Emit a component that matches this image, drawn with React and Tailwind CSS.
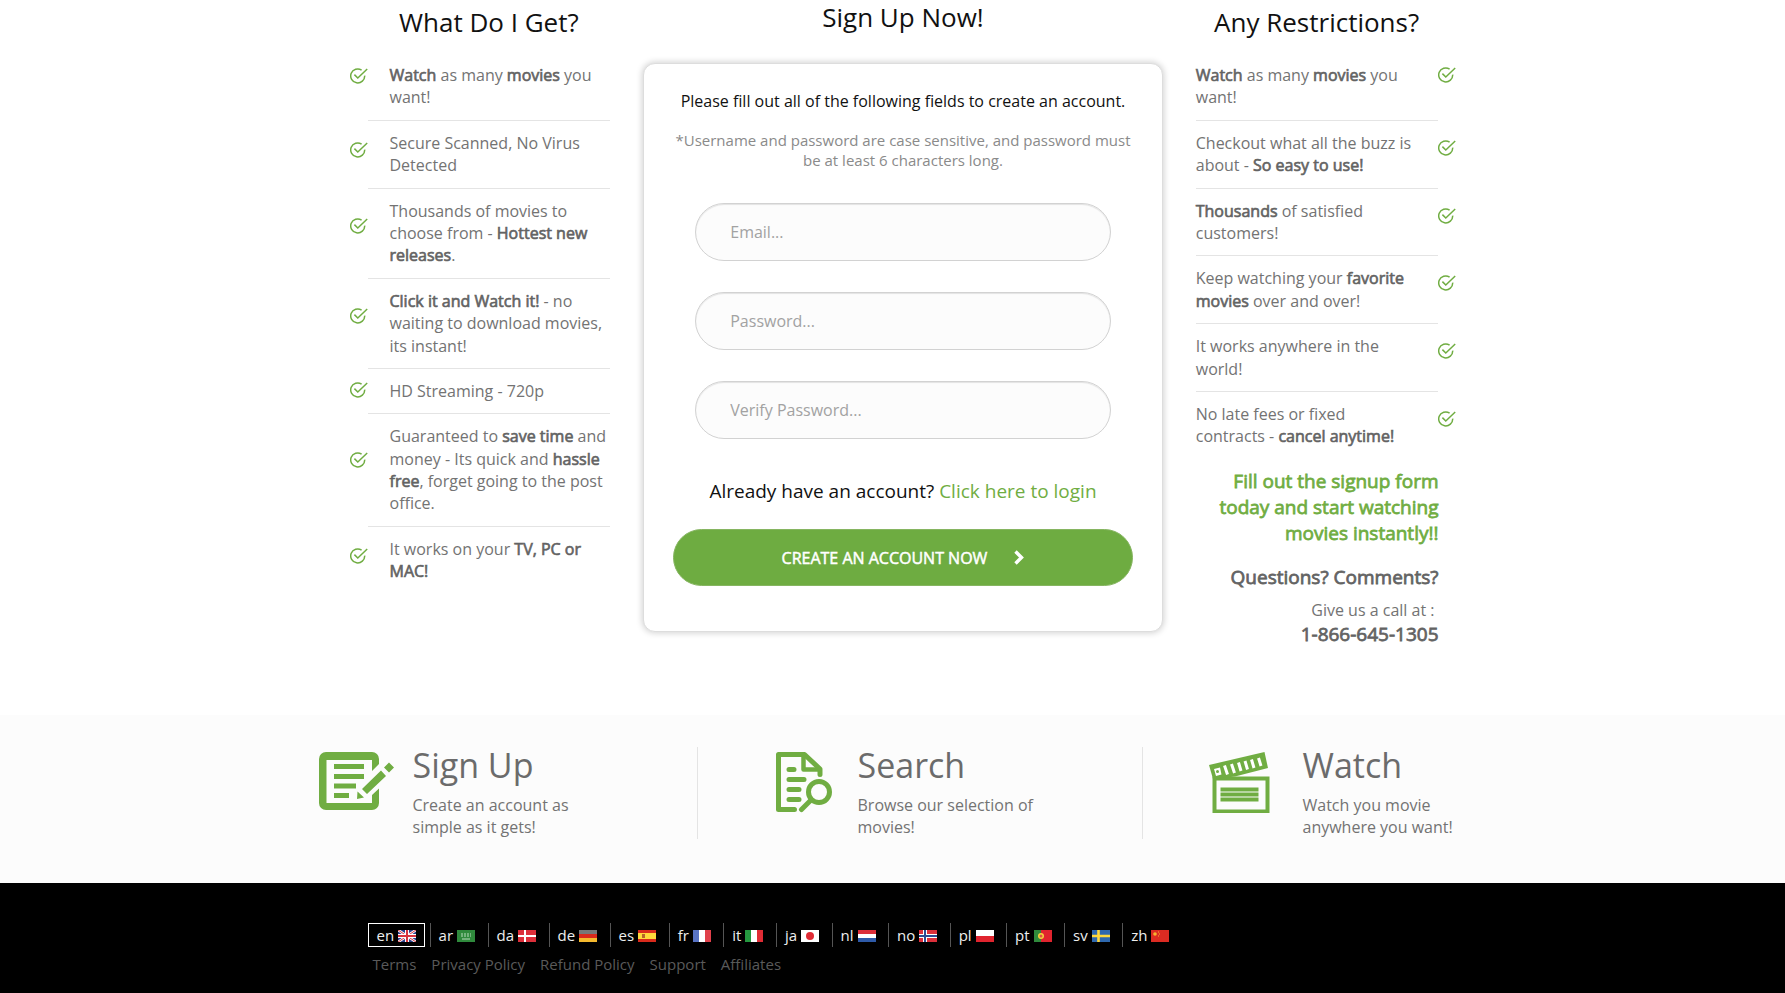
import React from "react";

const STRONG = "font-normal text-[#636363] [-webkit-text-stroke:0.04em]";

function B({ children }) {
  return <strong className={STRONG}>{children}</strong>;
}

function Check() {
  return (
    <svg width="18" height="16" viewBox="0 0 18 16" fill="none" stroke="#70ad42" strokeWidth="1.5" aria-hidden="true" className="block shrink-0">
      <path d="M11.6 2.1A7 7 0 1 0 14.7 7.6" />
      <path d="M4.4 6.6l3.4 3.4L17.2 1" />
    </svg>
  );
}

const benefits = [
  <><B>Watch</B> as many <B>movies</B> you want!</>,
  <>Secure Scanned, No Virus Detected</>,
  <>Thousands of movies to choose from - <B>Hottest new releases</B>.</>,
  <><B>Click it and Watch it!</B> - no waiting to download movies, its instant!</>,
  <>HD Streaming - 720p</>,
  <>Guaranteed to <B>save time</B> and money - Its quick and <B>hassle free</B>, forget going to the post office.</>,
  <>It works on your <B>TV, PC or MAC!</B></>,
];

const restrictions = [
  <><B>Watch</B> as many <B>movies</B> you want!</>,
  <>Checkout what all the buzz is about - <B>So easy to use!</B></>,
  <><B>Thousands</B> of satisfied customers!</>,
  <>Keep watching your <B>favorite movies</B> over and over!</>,
  <>It works anywhere in the world!</>,
  <>No late fees or fixed contracts - <B>cancel anytime!</B></>,
];

function Benefits() {
  return (
    <section>
      <h2 className="pl-[18px] pt-1 text-center text-[26px] leading-9 text-[#111]">What Do I Get?</h2>
      <ul className="mt-6">
        {benefits.map((text, i) => (
          <li key={i} className="flex">
            <div className="flex flex-col pt-1">
              {i > 0 && <span className="grow-[36]" />}
              <Check />
              <span className="grow-[64]" />
            </div>
            <div
              className={
                "flex-1 pl-[22px] " +
                (i > 0 ? "pt-[11px] " : "") +
                (i < benefits.length - 1 ? "border-b border-[#e4e4e4] pb-[11px]" : "pb-[11px]")
              }
            >
              {text}
            </div>
          </li>
        ))}
      </ul>
    </section>
  );
}

function Restrictions() {
  return (
    <section>
      <h2 className="pr-[18px] pt-1 text-center text-[26px] leading-9 text-[#111]">Any Restrictions?</h2>
      <ul className="mt-6">
        {restrictions.map((text, i) => (
          <li key={i} className="flex">
            <div
              className={
                "flex-1 pr-[20px] " +
                (i > 0 ? "pt-[11px] " : "") +
                (i < restrictions.length - 1 ? "border-b border-[#e4e4e4] pb-[11px]" : "")
              }
            >
              {text}
            </div>
            <div className={i > 0 ? "pt-[19px]" : "pt-[3px]"}>
              <Check />
            </div>
          </li>
        ))}
      </ul>
      <div className="pr-[17px] text-right">
        <p className="mt-[20px] text-[19px] leading-[26px] text-[#70ad42] [-webkit-text-stroke:0.04em]">
          Fill out the signup form today and start watching movies instantly!!
        </p>
        <p className="mt-[18px] text-[19px] leading-[26px] text-[#636363] [-webkit-text-stroke:0.04em]">Questions? Comments?</p>
        <p className="mt-[9px] pr-1">Give us a call at :</p>
        <p className="text-[19px] leading-[26px] text-[#636363] [-webkit-text-stroke:0.04em]">1-866-645-1305</p>
      </div>
    </section>
  );
}

const fields = [
  { id: "email", label: "Email...", type: "email" },
  { id: "password", label: "Password...", type: "password" },
  { id: "verify", label: "Verify Password...", type: "password" },
];

function SignUpForm() {
  return (
    <section>
      <h2 className="text-center text-[26px] leading-[34px] text-[#111]">Sign Up Now!</h2>
      <form
        onSubmit={(e) => e.preventDefault()}
        className="mt-[29px] rounded-xl border border-[#ddd] bg-white px-[29px] pb-[45px] pt-[26px] shadow-[0_0_6px_1px_rgba(0,0,0,0.18)]"
      >
        <p className="text-center text-[16px] text-[#111]">Please fill out all of the following fields to create an account.</p>
        <p className="mt-[18px] text-center text-[15px] leading-5 text-[#8a8a8a]">
          *Username and password are case sensitive, and password must be at least 6 characters long.
        </p>
        <div className="mt-[33px] flex flex-col gap-[31px] px-[22px]">
          {fields.map((f) => (
            <input
              key={f.id}
              id={f.id}
              type={f.type}
              aria-label={f.label}
              placeholder={f.label}
              className="h-[58px] w-full rounded-full border border-[#d2d2d2] bg-[#fcfcfc] px-[34px] text-[16px] shadow-[inset_0_1px_1px_rgba(0,0,0,0.1)] placeholder:text-[#a2a2a2]"
            />
          ))}
        </div>
        <p className="mt-[39px] text-center text-[19px] leading-[26px] text-[#111]">
          Already have an account? <a href="#login" className="text-[#70ad42]">Click here to login</a>
        </p>
        <button
          type="submit"
          className="mt-[25px] flex h-[57px] w-full items-center justify-center gap-[27px] rounded-full border border-[#86b561] bg-[#6eac41] text-[16px] uppercase text-white [-webkit-text-stroke:0.03em]"
        >
          Create an account now
          <svg width="10" height="15" viewBox="0 0 10 15" fill="none" stroke="#fff" strokeWidth="3.4" aria-hidden="true">
            <path d="M1.5 1.5l6 6-6 6" />
          </svg>
        </button>
      </form>
    </section>
  );
}

function SignUpIcon() {
  return (
    <svg width="75" height="61" viewBox="0 0 75 61" aria-hidden="true" className="block shrink-0">
      <path fillRule="evenodd" fill="#70ad42" d="M7 0H53a7 7 0 0 1 7 7V12L53 19V8H7.500V51H53V43L60 36.500V51a7 7 0 0 1-7 7H7a7 7 0 0 1-7-7V7a7 7 0 0 1 7-7Z" />
      <path stroke="#70ad42" strokeWidth="5" d="M15 14.500H45M15 24.500H45M15 34H37M15 43.500H30" />
      <path fill="#70ad42" d="M43 37L62 18.500L67 24L48 42ZM65 15.500L70 10.500L75 15.500L70 20.500ZM38.500 39.500L45 45.500L38 47Z" />
    </svg>
  );
}

function SearchIcon() {
  return (
    <svg width="75" height="61" viewBox="0 0 75 61" aria-hidden="true" fill="none" stroke="#70ad42" strokeLinecap="round" strokeLinejoin="round" className="block shrink-0">
      <path strokeWidth="5" d="M30.500 57.500H14.500V2.500H40.500L56 17V22.500" />
      <path strokeWidth="4.500" d="M39.500 3V17.500H55" />
      <path strokeWidth="5" d="M25 17.500H30M25 27.500H40M25 37.500H35M25 47.500H35" />
      <circle cx="55" cy="40" r="10.500" strokeWidth="5" />
      <path strokeWidth="5" d="M47 48L37.500 57.500" />
    </svg>
  );
}

function WatchIcon() {
  return (
    <svg width="75" height="61" viewBox="0 0 75 61" aria-hidden="true" className="block shrink-0">
      <rect x="5.500" y="26.500" width="53" height="33" fill="none" stroke="#70ad42" strokeWidth="4" />
      <path stroke="#70ad42" strokeWidth="4" d="M11.500 37.500H49.500M11.500 42.500H49.500M11.500 47.500H49.500" />
      <path fill="#70ad42" d="M0 13L55.500 0L59 16L26 24.500L4 27Z" />
      <path stroke="#fff" strokeWidth="3" d="M15.500 13.500L18.500 22.500M22.500 12L25.500 21M29.500 10.500L32 19M36 9L38.500 17.500M42.500 7.500L45 16M49.500 6L52 14" />
      <path fill="#fff" d="M5 17L11 15.500L12.500 22.500L7 24Z" />
      <circle cx="8.500" cy="19.500" r="1.500" fill="#70ad42" />
    </svg>
  );
}

const features = [
  { title: "Sign Up", text: "Create an account as simple as it gets!", Icon: SignUpIcon },
  { title: "Search", text: "Browse our selection of movies!", Icon: SearchIcon },
  { title: "Watch", text: "Watch you movie anywhere you want!", Icon: WatchIcon },
];

function Features() {
  return (
    <section className="bg-[#fcfcfc] pb-[44px] pl-[55px] pt-[32px]">
      <div className="mx-auto grid max-w-[1335px] grid-cols-3">
        {features.map(({ title, text, Icon }, i) => (
          <article
            key={title}
            className={"flex h-[92px] gap-[19px] pl-[66px] " + (i < 2 ? "border-r border-[#e4e4e4]" : "")}
          >
            <div className="pt-[5px]"><Icon /></div>
            <div>
              <h3 className="text-[34px] leading-9 text-[#6b6b6b]">{title}</h3>
              <p className="mt-[11px] max-w-[190px]">{text}</p>
            </div>
          </article>
        ))}
      </div>
    </section>
  );
}

const flags = {
  en: <><path fill="#2b3f8c" d="M0 0h18v12H0z" /><path stroke="#fff" strokeWidth="2.600" d="M0 0l18 12M18 0L0 12" /><path stroke="#d8343f" d="M0 0l18 12M18 0L0 12" /><path stroke="#fff" strokeWidth="4" d="M9 0v12M0 6h18" /><path stroke="#d8343f" strokeWidth="2" d="M9 0v12M0 6h18" /></>,
  ar: <><path fill="#2f8a3c" d="M0 0h18v12H0z" /><path stroke="#b9dcbd" strokeDasharray="2 1" d="M4 4h10M4 6h10" /><path stroke="#b9dcbd" d="M5 9h8" /></>,
  da: <><path fill="#dc2f3a" d="M0 0h18v12H0z" /><path stroke="#fff" strokeWidth="2" d="M7 0v12M0 6h18" /></>,
  de: <><path fill="#777" d="M0 0h18v4H0z" /><path fill="#d92a1c" d="M0 4h18v4H0z" /><path fill="#f5b92e" d="M0 8h18v4H0z" /></>,
  es: <><path fill="#d92a1c" d="M0 0h18v12H0z" /><path fill="#ffd83b" d="M0 3h18v6H0z" /><path fill="#b5652a" d="M4 4h3v4H4z" /></>,
  fr: <><path fill="#fff" d="M0 0h18v12H0z" /><path fill="#5873c4" d="M0 0h6v12H0z" /><path fill="#e0404a" d="M12 0h6v12h-6z" /></>,
  it: <><path fill="#fff" d="M0 0h18v12H0z" /><path fill="#25983f" d="M0 0h6v12H0z" /><path fill="#e02c35" d="M12 0h6v12h-6z" /></>,
  ja: <><path fill="#fff" d="M0 0h18v12H0z" /><circle cx="9" cy="6" r="4" fill="#e02c35" /></>,
  nl: <><path fill="#fff" d="M0 0h18v12H0z" /><path fill="#dc2f3a" d="M0 0h18v4H0z" /><path fill="#2e5aa8" d="M0 8h18v4H0z" /></>,
  no: <><path fill="#dc2f3a" d="M0 0h18v12H0z" /><path stroke="#fff" strokeWidth="4" d="M6 0v12M0 6h18" /><path stroke="#2e4a92" strokeWidth="2" d="M6 0v12M0 6h18" /></>,
  pl: <><path fill="#fff" d="M0 0h18v12H0z" /><path fill="#e0242e" d="M0 6h18v6H0z" /></>,
  pt: <><path fill="#e0242e" d="M0 0h18v12H0z" /><path fill="#2f8a3c" d="M0 0h7v12H0z" /><circle cx="7" cy="6" r="3" fill="#f3d23b" /><circle cx="7" cy="6" r="1.500" fill="#e0504a" /></>,
  sv: <><path fill="#2e68ae" d="M0 0h18v12H0z" /><path stroke="#ffd83b" strokeWidth="2.600" d="M6.500 0v12M0 6h18" /></>,
  zh: <><path fill="#dc2b22" d="M0 0h18v12H0z" /><circle cx="4" cy="4" r="1.800" fill="#f7b32e" /><path stroke="#f7b32e" d="M7 2h1M8 4h1M7 6h1" /></>,
};

function Footer() {
  return (
    <footer className="grow bg-black pb-4 pt-[40px] text-[15px]">
      <div className="mx-auto max-w-[1170px] pl-[60px]">
        <nav aria-label="Languages" className="flex max-w-[810px] flex-wrap justify-between">
          {Object.entries(flags).map(([code, flag], i) => (
            <a
              key={code}
              href={"#" + code}
              className={
                "flex h-[24px] items-center gap-[4px] px-[8px] text-[#eee] " +
                (i === 0 ? "border border-white" : "border-l border-[#555]")
              }
            >
              {code}
              <svg width="18" height="12" viewBox="0 0 18 12" fill="none" aria-hidden="true" className="mt-[2px]">{flag}</svg>
            </a>
          ))}
        </nav>
        <nav aria-label="Site" className="mt-[7px] flex gap-[15px] pl-[5px] leading-5 text-[#5a5a5a]">
          <a href="#terms">Terms</a>
          <a href="#privacy">Privacy Policy</a>
          <a href="#refund">Refund Policy</a>
          <a href="#support">Support</a>
          <a href="#affiliates">Affiliates</a>
        </nav>
      </div>
    </footer>
  );
}

export default function App() {
  return (
    <div className="flex min-h-screen flex-col bg-white font-['Open_Sans',sans-serif] text-[16px] leading-[1.4] text-[#737373]">
      <main className="mx-auto w-full max-w-[1170px] pb-[68px] pl-[42px] pr-[22px]">
        <div className="grid grid-cols-[261fr_520fr_260fr] gap-x-[33px]">
          <Benefits />
          <SignUpForm />
          <Restrictions />
        </div>
      </main>
      <Features />
      <Footer />
    </div>
  );
}
